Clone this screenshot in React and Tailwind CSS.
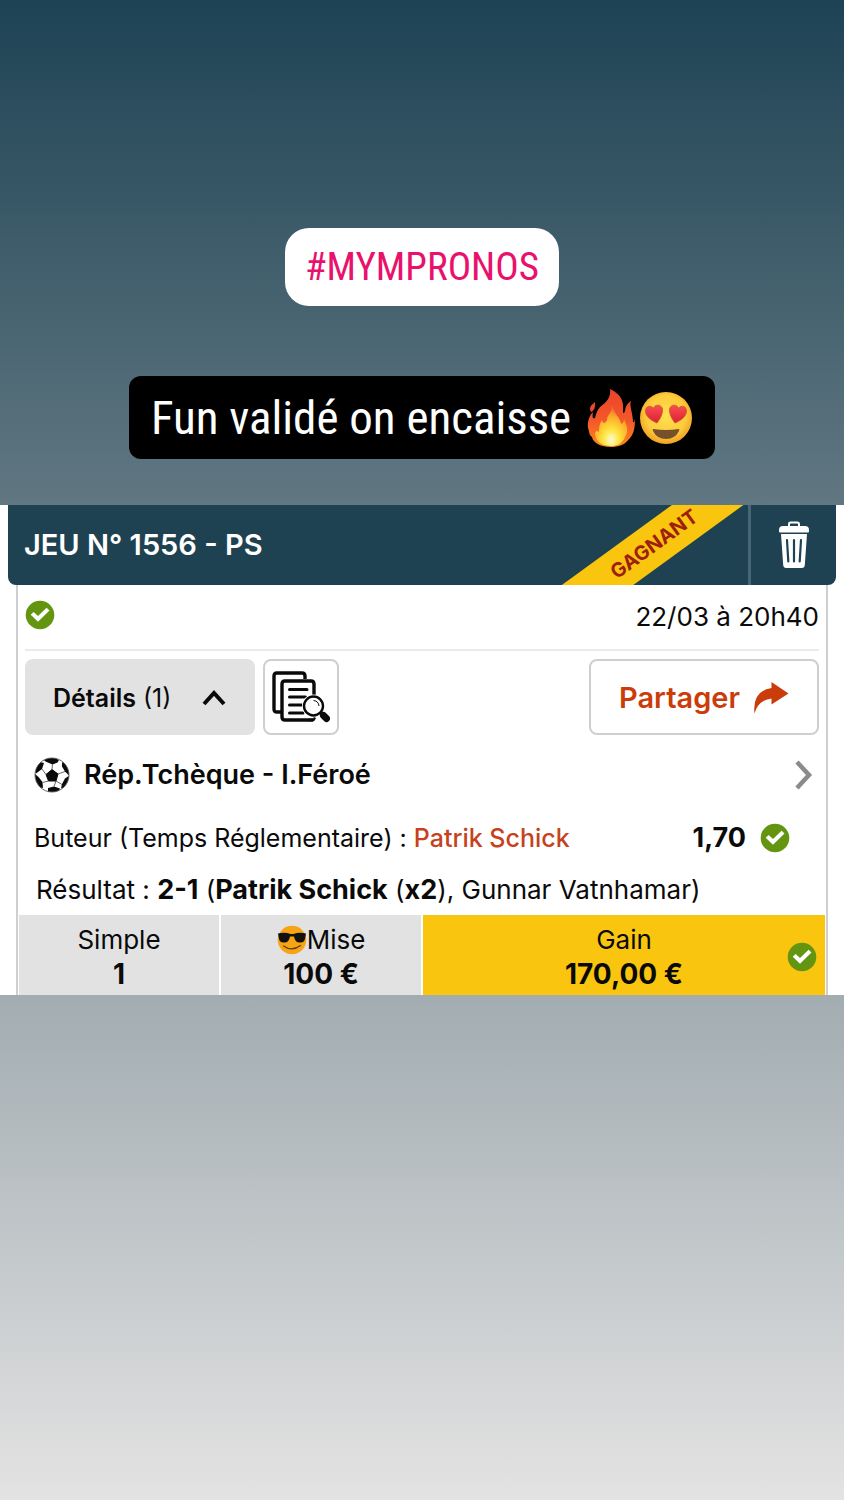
import React from "react";

function CheckBadge() {
  return (
    <svg viewBox="0 0 30 30" className="size-[30px] shrink-0" role="img" aria-label="Gagné">
      <circle cx="15" cy="15" r="14.3" fill="#649510" />
      <path d="M5.700 14.800 8.600 12 13 16 21.600 7.700 24.500 10.600 13 21.800Z" fill="#fff" />
    </svg>
  );
}

function TrashIcon() {
  return (
    <svg viewBox="0 0 32 48" className="h-12 w-8" aria-hidden="true">
      <path d="M11 6V3.200Q11 1.500 12.700 1.500H19.300Q21 1.500 21 3.200V6" fill="none" stroke="#fff" strokeWidth="2" />
      <path d="M5 5H27Q31 5 31 9V10.500Q31 11.500 30 11.500H2Q1 11.500 1 10.500V9Q1 5 5 5Z" fill="#fff" />
      <path d="M3 13H29L26.800 44Q26.600 47 23.800 47H8.200Q5.400 47 5.200 44Z" fill="#fff" />
      <path d="M9 19 10.300 40.500M16 19V40.500M23 19 21.700 40.500" stroke="#1f4252" strokeWidth="2.200" strokeLinecap="round" />
    </svg>
  );
}

function DocumentsIcon() {
  return (
    <svg viewBox="0 0 58 52" className="h-[52px] w-[58px] shrink-0" fill="none" stroke="#0a0a0a" aria-hidden="true">
      <path d="M9 41H5Q2 41 2 38V5Q2 2 5 2H30Q33 2 33 5V8" strokeWidth="3.400" />
      <path d="M42 25V13Q42 10 39 10H13Q10 10 10 13V46Q10 49 13 49H41" strokeWidth="3.400" />
      <path d="M17.500 18.500H35M17.500 26H33.500M17.500 34H30M17.500 42H31" strokeWidth="3" strokeLinecap="round" />
      <circle cx="41.500" cy="35" r="11.500" fill="#fff" stroke="none" />
      <path d="M36 49H41.500L43 46.500" strokeWidth="2.400" />
      <circle cx="41.500" cy="35" r="9.500" fill="#fff" strokeWidth="2.400" />
      <path d="M41.500 29.500Q46.500 30 47 35" strokeWidth="1" />
      <path d="M48 41.500 51 44" strokeWidth="2.800" />
      <path d="M51.500 44.500 54.500 47.500" strokeWidth="7" strokeLinecap="round" />
    </svg>
  );
}

function BallIcon() {
  return (
    <svg viewBox="0 0 36 36" className="size-9 shrink-0" aria-hidden="true">
      <defs>
        <clipPath id="ball">
          <circle cx="18" cy="18" r="17" />
        </clipPath>
      </defs>
      <circle cx="18" cy="18" r="17" fill="#fff" />
      <g clipPath="url(#ball)" fill="#0a0a0a">
        <path d="M18 12.500 24 17 22 24H14.500L12 17.500Z" stroke="#0a0a0a" strokeLinejoin="round" />
        <path d="M9 2 19 0 25 3 23.500 5.500 18.500 7.500 11.500 4.500Z" />
        <path d="M28 5 36 10 35.500 19 31 14.500 28 9.500Z" />
        <path d="M31 21.500 36 18 34 29 27 31.500 28 27Z" />
        <path d="M14 31 20 29.500 26 31.500 24 36H14Z" />
        <path d="M0 16 4.500 20 8.500 25 9 31 3 30Z" />
        <path d="M0 11 6 5 10 6 8 12 2 16.500Z" />
      </g>
      <g fill="none" stroke="#555" strokeWidth="0.900">
        <path d="M18 12.500 18.500 7M24 17 31 14.500M22 24 28 27.500M14.500 24 8.500 25.500M12 17.500 8 12M22 24 20 29.500" />
        <circle cx="18" cy="18" r="17" />
      </g>
    </svg>
  );
}

function FireEmoji() {
  return (
    <svg viewBox="0 0 48 60" className="h-[60px] w-12 shrink-0" role="img" aria-label="feu">
      <defs>
        <linearGradient id="flame" x1="0" y1="0" x2="0" y2="1">
          <stop offset="0" stopColor="#e9432b" />
          <stop offset="0.55" stopColor="#f4582a" />
          <stop offset="1" stopColor="#f98a1d" />
        </linearGradient>
        <radialGradient id="core" cx="0.5" cy="0.85" r="0.75">
          <stop offset="0" stopColor="#fffbd0" />
          <stop offset="0.35" stopColor="#ffe33d" />
          <stop offset="0.75" stopColor="#fdac2a" />
          <stop offset="1" stopColor="#f7702c" />
        </radialGradient>
      </defs>
      <path
        d="M23 1C34 6 37 13 36 23C36 27 38 25 38.500 20C40 16 42 14 44 13C42 18 46 25 46 34C48 35 47 33 48 31C48 42 46 47 42 51C38 57 31 59 24 59C14 59 6 55 5 49C2 47 3 46 1 40C0 33 3 27 6 24C5 30 6 31 8 30C9 26 10 22 13 19C20 14 24 9 23 1Z"
        fill="url(#flame)"
      />
      <path d="M8 14C3 18 2 20 4 24C8 22 8 19 8 14Z" fill="#ec482b" />
      <path
        d="M25 17C27 26 32 28 34 35C35 37 37 34 37 31C40 38 42 43 38 49C35 56 30 58 24 58C15 58 9 54 8 46C8 43 10 42 12 44C12 38 13 35 15 32C16 36 18 36 20 32C20 26 25 26 25 17Z"
        fill="url(#core)"
      />
    </svg>
  );
}

function HeartEyesEmoji() {
  return (
    <svg viewBox="0 0 54 54" className="size-[54px] shrink-0" role="img" aria-label="yeux en coeur">
      <defs>
        <radialGradient id="face" cx="0.5" cy="0.45" r="0.55">
          <stop offset="0" stopColor="#ffe04e" />
          <stop offset="0.7" stopColor="#fdcb3c" />
          <stop offset="1" stopColor="#efa125" />
        </radialGradient>
        <linearGradient id="heart" x1="0" y1="0" x2="0" y2="1">
          <stop offset="0" stopColor="#fb4f50" />
          <stop offset="1" stopColor="#dc1f35" />
        </linearGradient>
      </defs>
      <circle cx="27" cy="27" r="26" fill="url(#face)" />
      <path d="M14.500 38Q27 40 39.500 38Q41 38 40 40Q36 48 27 48Q18 48 14 40Q13 38 14.500 38Z" fill="#76502a" />
      <path
        d="M18 32C11 29 6.500 25 6.500 20C6.500 15 12 13.500 14.500 17.500C15.500 13 22.500 13 23.500 18C24 23 21 28 18 32Z"
        fill="url(#heart)"
        stroke="#c7552a"
        strokeWidth="0.800"
      />
      <path
        d="M36 32C43 29 47.500 25 47.500 20C47.500 15 42 13.500 39.500 17.500C38.500 13 31.500 13 30.500 18C30 23 33 28 36 32Z"
        fill="url(#heart)"
        stroke="#c7552a"
        strokeWidth="0.800"
      />
    </svg>
  );
}

function SunglassesEmoji() {
  return (
    <svg viewBox="0 0 30 30" className="size-[30px] shrink-0" aria-hidden="true">
      <circle cx="15" cy="15" r="14.300" fill="#f6a416" />
      <path d="M1 8.500Q8 7 13.500 9H16.500Q22 7 29 8.500L28 14Q27 18 22.500 17.500Q18 17.500 17 11.500H13Q12 17.500 7.500 17.500Q3 18 2 14Z" fill="#111" />
      <path d="M6.500 21Q15 27 23.500 20.500" fill="none" stroke="#5d3a0c" strokeWidth="1.200" strokeLinecap="round" />
    </svg>
  );
}

export default function App() {
  return (
    <main className="flex min-h-screen flex-col bg-linear-to-b from-[#1d4354] via-[#83939a] to-[#e4e3e3] font-['Inter',sans-serif] text-[26px] leading-8 text-[#0a0a0a]">
      <div className="flex flex-col items-center pt-[228px] pb-[46px] font-['Roboto_Condensed',sans-serif]">
        <a href="#mympronos" className="rounded-3xl bg-white px-5 py-2 text-[39px] leading-[62px] text-[#e8116c]">
          #MYMPRONOS
        </a>
        <h1 className="mt-[70px] flex items-center rounded-xl bg-black px-[22px] text-[47px] leading-[83px] text-white">
          <span>Fun validé on encaisse</span>
          <span className="ml-4 flex items-center gap-1">
            <FireEmoji />
            <HeartEyesEmoji />
          </span>
        </h1>
      </div>

      <section className="bg-white px-2">
        <header className="relative flex h-20 items-stretch overflow-hidden rounded-b-lg bg-[#1f4252] text-white">
          <h2 className="flex flex-1 items-center px-4 text-[29px] font-semibold">JEU N° 1556 - PS</h2>
          <div className="absolute top-[18px] right-[82px] w-[200px] -rotate-36 bg-[#f9c50f] text-center text-[20px] leading-[42px] font-bold text-[#9f1f0c]">
            GAGNANT
          </div>
          <button type="button" aria-label="Supprimer" className="flex w-[88px] items-center justify-center border-l-3 border-[#476777]">
            <TrashIcon />
          </button>
        </header>

        <div className="mx-2 border-x-2 border-[#cfcfd1]">
          <div className="mx-[7px] flex h-[66px] items-center justify-between border-b-2 border-[#ebebeb]">
            <div className="pb-1">
              <CheckBadge />
            </div>
            <time>22/03 à 20h40</time>
          </div>

          <div className="mx-[7px] mt-2 flex h-[76px] gap-2">
            <button type="button" aria-expanded="true" className="flex w-[230px] items-center justify-between rounded-lg bg-[#e2e2e2] px-7 pt-[2px] text-[25px]">
              <span>
                <span className="font-semibold">Détails</span> (1)
              </span>
              <svg viewBox="0 0 26 18" className="h-[18px] w-[26px]" aria-hidden="true">
                <path d="M3 15 13 4 23 15" fill="none" stroke="#0a0a0a" strokeWidth="4" />
              </svg>
            </button>
            <button type="button" aria-label="Voir le ticket" className="flex w-[76px] items-center justify-center rounded-lg border-2 border-[#cfcfcf]">
              <DocumentsIcon />
            </button>
            <button type="button" className="ml-auto flex w-[230px] items-center justify-between rounded-lg border-2 border-[#cfcfcf] px-7 pt-[2px] text-[29px] font-semibold text-[#cb3c0b]">
              Partager
              <svg viewBox="0 0 36 32" className="h-8 w-9" aria-hidden="true">
                <path d="M18.500 0 35.500 11.500 18.500 22.500V16.500Q5 18 1.500 31.500Q-1 9 18.500 6Z" fill="currentColor" />
              </svg>
            </button>
          </div>

          <a href="#match" className="mr-3 ml-4 flex h-20 items-center">
            <BallIcon />
            <span className="ml-[14px] flex-1 text-[27px] font-semibold">Rép.Tchèque - I.Féroé</span>
            <svg viewBox="0 0 20 30" className="h-[30px] w-5" aria-hidden="true">
              <path d="M3 2 15 15 3 28" fill="none" stroke="#8b8b8b" strokeWidth="4.500" />
            </svg>
          </a>

          <div className="flex h-[46px] items-center pr-9 pl-4 text-[25px]">
            <p className="flex-1">
              Buteur (Temps Réglementaire) : <span className="font-medium text-[#c6421c]">Patrik Schick</span>
            </p>
            <span className="mr-[14px] text-[27px] font-bold">1,70</span>
            <CheckBadge />
          </div>

          <p className="flex h-[54px] items-center pt-1 pl-[18px]">
            <span>
              Résultat : <b className="text-[27px]">2-1</b> (<b className="text-[27px]">Patrik Schick</b> (
              <b className="text-[27px]">x2</b>), Gunnar Vatnhamar)
            </span>
          </p>

          <dl className="mx-px grid grid-cols-4 gap-[2px] text-center leading-[34px]">
            <div className="bg-[#e2e2e2] pt-2 pb-1">
              <dt>Simple</dt>
              <dd className="text-[28px] font-bold">1</dd>
            </div>
            <div className="bg-[#e2e2e2] pt-2 pb-1">
              <dt className="flex items-center justify-center">
                <SunglassesEmoji />
                Mise
              </dt>
              <dd className="text-[28px] font-bold">100 €</dd>
            </div>
            <div className="relative col-span-2 bg-[#f9c50f] pt-2 pb-1">
              <dt>Gain</dt>
              <dd className="text-[28px] font-bold">170,00 €</dd>
              <span className="absolute inset-y-0 right-2 flex items-center pt-1">
                <CheckBadge />
              </span>
            </div>
          </dl>
        </div>
      </section>
    </main>
  );
}
